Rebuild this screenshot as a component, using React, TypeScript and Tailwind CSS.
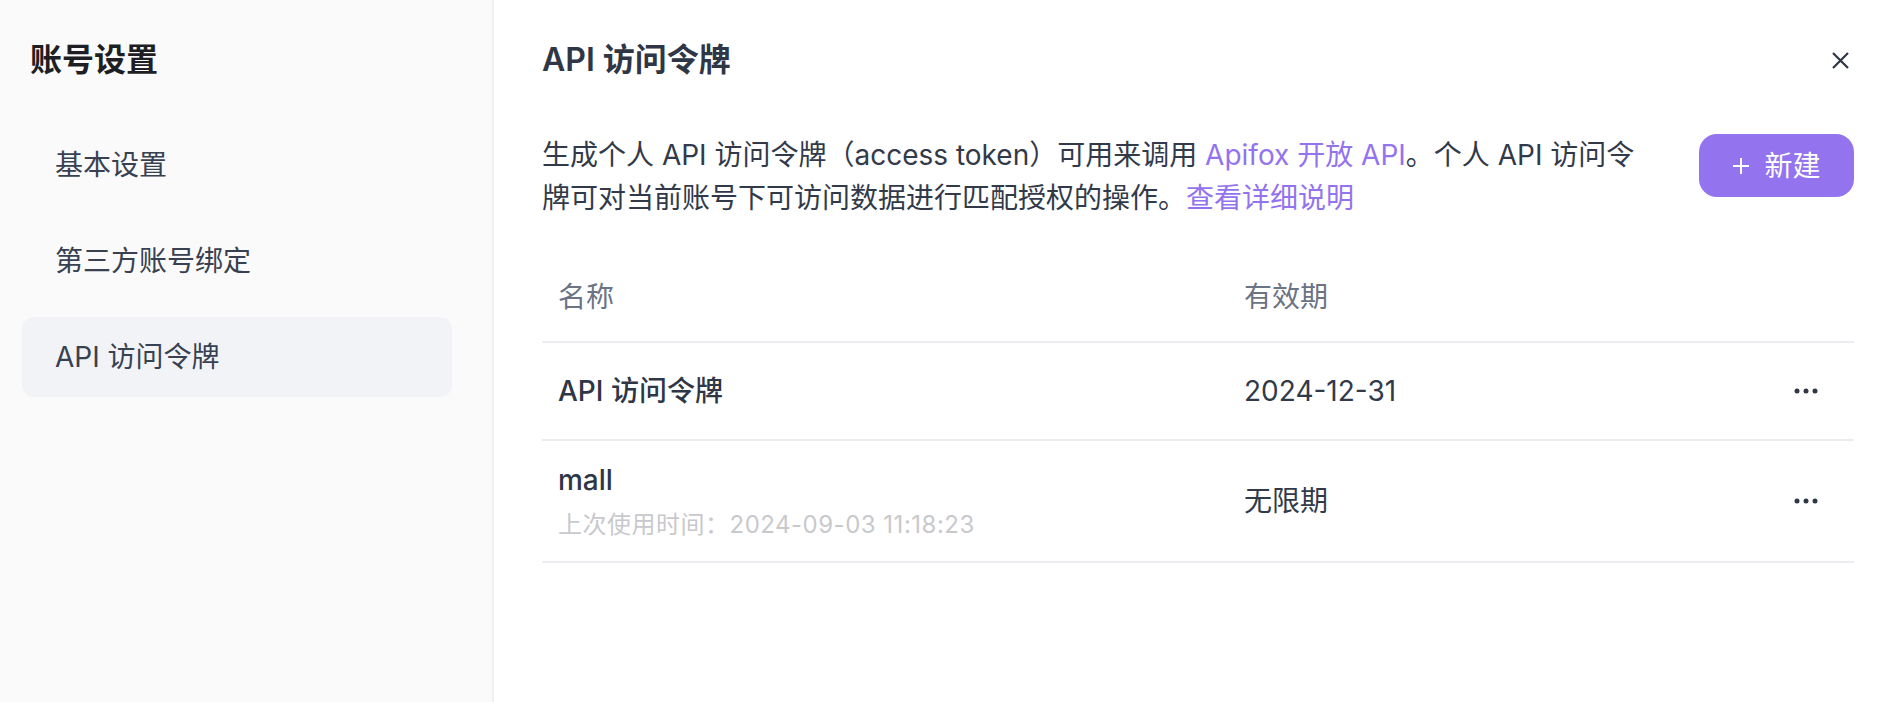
const FONT = "font-['Inter','Noto_Sans_CJK_SC',sans-serif]";

const MENU = ["基本设置", "第三方账号绑定", "API 访问令牌"];

type Token = { name: string; lastUsed?: string; expires: string };

const TOKENS: Token[] = [
  { name: "API 访问令牌", expires: "2024-12-31" },
  { name: "mall", lastUsed: "2024-09-03 11:18:23", expires: "无限期" },
];

function Dots() {
  return (
    <svg width="24" height="6" viewBox="0 0 24 6" className="text-[#2f3646]">
      <circle cx="3" cy="3" r="2.5" fill="currentColor" />
      <circle cx="12" cy="3" r="2.5" fill="currentColor" />
      <circle cx="21" cy="3" r="2.5" fill="currentColor" />
    </svg>
  );
}

export default function App() {
  const active = "API 访问令牌";

  return (
    <div className={`flex h-[702px] w-full bg-white text-[#323a4a] ${FONT}`}>
      {/* 侧栏 */}
      <aside className="w-[494px] shrink-0 border-r-2 border-[#f0f0f3] bg-[#fafafa] pl-[22px] pt-[38px]">
        <h2 className="ml-2 text-[32px] font-semibold leading-[44px] text-[#1d1f24]">账号设置</h2>
        <nav className="mt-[43px] flex flex-col gap-4">
          {MENU.map((m) => (
            <div
              key={m}
              className={`flex h-[80px] w-[430px] items-center rounded-[12px] px-[33px] text-[28px] text-[#384152] ${
                m === active ? "bg-[#f2f3f7]" : ""
              }`}
            >
              {m}
            </div>
          ))}
        </nav>
      </aside>

      {/* 内容 */}
      <main className="flex-1 pl-[48px] pr-[40px] pt-[38px]">
        <div className="flex items-center justify-between">
          <h1 className="text-[32px] font-semibold leading-[44px] text-[#2f3646]">API 访问令牌</h1>
          <button className="mr-[2px] flex h-6 w-6 items-center justify-center text-[#2f3646]">
            <svg width="17" height="17" viewBox="0 0 17 17" fill="none" stroke="currentColor" strokeWidth="2.2">
              <path d="M1 1L16 16M16 1L1 16" />
            </svg>
          </button>
        </div>

        <div className="mt-[52px] flex items-start justify-between gap-8">
          <p className="text-[28px] leading-[43px] text-[#323a4a]">
            生成个人 API 访问令牌（access token）可用来调用 <span className="text-[#9373ee]">Apifox 开放 API</span>。个人 API 访问令
            <br />
            牌可对当前账号下可访问数据进行匹配授权的操作。<span className="text-[#9373ee]">查看详细说明</span>
          </p>
          <button className="flex h-[63px] w-[155px] shrink-0 items-center justify-center gap-[14px] rounded-[18px] bg-[#9373ee] text-[28px] text-white">
            <svg width="18" height="18" viewBox="0 0 18 18" fill="none" stroke="currentColor" strokeWidth="2">
              <path d="M9 1V17M1 9H17" />
            </svg>
            新建
          </button>
        </div>

        <div className="mt-[33px]">
          <div className="grid h-[90px] grid-cols-[686px_1fr_96px] items-center border-b-2 border-[#ebebf0] text-[28px] text-[#6b7385]">
            <div className="pl-4">名称</div>
            <div className="pl-4">有效期</div>
            <div />
          </div>
          {TOKENS.map((t) => (
            <div
              key={t.name}
              className={`grid grid-cols-[686px_1fr_96px] items-center border-b-2 border-[#ebebf0] ${
                t.lastUsed ? "h-[122px]" : "h-[98px]"
              }`}
            >
              <div className="flex flex-col pl-4">
                <span className="text-[28px] font-medium leading-[40px] text-[#2f3646]">{t.name}</span>
                {t.lastUsed && (
                  <span className="mt-2 text-[24px] leading-[34px] tracking-[0.5px] text-[#c8c9cd]">
                    上次使用时间：{t.lastUsed}
                  </span>
                )}
              </div>
              <div className="pl-4 text-[28px] text-[#323a4a]">{t.expires}</div>
              <div className="flex justify-center">
                <Dots />
              </div>
            </div>
          ))}
        </div>
      </main>
    </div>
  );
}
